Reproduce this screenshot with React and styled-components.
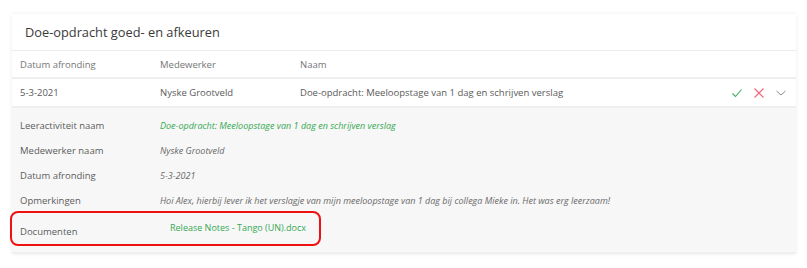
import React from "react";
import styled, { createGlobalStyle } from "styled-components";

const GlobalStyle = createGlobalStyle`
  body {
    margin: 0;
    background: #ffffff;
    font-family: "Open Sans", "Noto Sans", sans-serif;
  }
`;

const details = [
  { label: "Leeractiviteit naam", value: "Doe-opdracht: Meeloopstage van 1 dag en schrijven verslag", green: true },
  { label: "Medewerker naam", value: "Nyske Grootveld" },
  { label: "Datum afronding", value: "5-3-2021" },
  {
    label: "Opmerkingen",
    value: "Hoi Alex, hierbij lever ik het verslagje van mijn meeloopstage van 1 dag bij collega Mieke in. Het was erg leerzaam!",
  },
];

const App = () => {
  return (
    <>
      <GlobalStyle />
      <Page>
        <Card>
          <Title>Doe-opdracht goed- en afkeuren</Title>
          <HeadRow>
            <Cell>Datum afronding</Cell>
            <Cell>Medewerker</Cell>
            <Cell>Naam</Cell>
          </HeadRow>
          <DataRow>
            <Cell>5-3-2021</Cell>
            <Cell>Nyske Grootveld</Cell>
            <Cell>Doe-opdracht: Meeloopstage van 1 dag en schrijven verslag</Cell>
            <Actions>
              <svg width="12" height="12" viewBox="0 0 12 12">
                <path d="M1.5 6.5 L4.5 9.5 L10.5 2.5" fill="none" stroke="#3fae63" strokeWidth="1.1" />
              </svg>
              <svg width="12" height="12" viewBox="0 0 12 12">
                <path d="M1.5 1.5 L10.5 10.5 M10.5 1.5 L1.5 10.5" fill="none" stroke="#f0647c" strokeWidth="1.1" />
              </svg>
              <svg width="12" height="12" viewBox="0 0 12 12">
                <path d="M1.5 4 L6 8 L10.5 4" fill="none" stroke="#8a8a8a" strokeWidth="1" />
              </svg>
            </Actions>
          </DataRow>
          <Detail>
            {details.map((d) => (
              <DetailRow key={d.label}>
                <Label>{d.label}</Label>
                <Value $green={d.green}>{d.value}</Value>
              </DetailRow>
            ))}
            <DocRow>
              <DocLabel>Documenten</DocLabel>
              <DocLink>Release Notes - Tango (UN).docx</DocLink>
              <Highlight />
            </DocRow>
          </Detail>
        </Card>
      </Page>
    </>
  );
};

export default App;

const Page = styled.div`
  padding: 14px 11px 14px 12px;
`;

const Card = styled.div`
  background: #ffffff;
  box-shadow: 0 0 4px rgba(0, 0, 0, 0.08);
`;

const Title = styled.div`
  height: 36px;
  padding: 0 13px;
  display: flex;
  align-items: center;
  font-size: 12.8px;
  color: #3a3a3a;
  border-bottom: 1px solid #ececec;
`;

const Row = styled.div`
  display: grid;
  grid-template-columns: 140px 140px 1fr auto;
  align-items: center;
  padding: 0 8px 0 8px;
  font-size: 9.5px;
`;

const HeadRow = styled(Row)`
  height: 26px;
  color: #767676;
  border-bottom: 2px solid #efefef;
`;

const DataRow = styled(Row)`
  height: 27px;
  color: #5a5a5a;
  border-bottom: 2px solid #efefef;
`;

const Cell = styled.div`
  white-space: nowrap;
`;

const Actions = styled.div`
  display: flex;
  gap: 10px;
  padding-right: 1px;
  align-items: center;
`;

const Detail = styled.div`
  background: #f7f7f7;
  padding: 5px 8px 5px 8px;
  border-bottom: 2px solid #efefef;
`;

const DetailRow = styled.div`
  display: grid;
  grid-template-columns: 140px 1fr;
  align-items: center;
  height: 25px;
  font-size: 9.5px;
`;

const Label = styled.div`
  color: #5c5c5c;
  white-space: nowrap;
`;

const Value = styled.div`
  color: ${(p) => (p.$green ? "#35a853" : "#6a6a6a")};
  font-style: italic;
  font-size: 9px;
  white-space: nowrap;
`;

const DocRow = styled(DetailRow)`
  position: relative;
  height: 34px;
  align-items: start;
`;

const DocLabel = styled(Label)`
  padding-top: 12px;
`;

const DocLink = styled.div`
  color: #35a853;
  font-size: 9px;
  padding-left: 10px;
  padding-top: 8px;
`;

const Highlight = styled.div`
  position: absolute;
  left: -10px;
  top: -2px;
  width: 311px;
  height: 35px;
  box-sizing: border-box;
  border: 2px solid #ee1111;
  border-radius: 8px;
  pointer-events: none;
`;
